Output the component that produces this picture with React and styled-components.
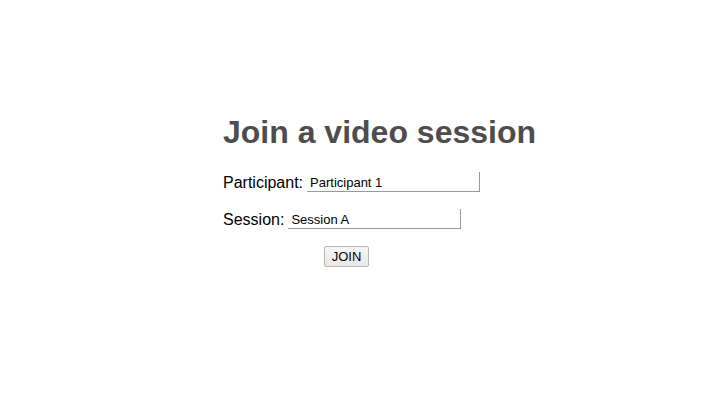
import React from 'react'
import styled, { createGlobalStyle } from 'styled-components'

const GlobalStyle = createGlobalStyle`
  body {
    margin: 0;
    background: #fff;
    font-family: "Liberation Sans", Arial, sans-serif;
  }
`

const Wrapper = styled.div`
  width: 272px;
  margin: 0 auto;
  padding-top: 112px;
`

const Title = styled.h1`
  margin: 0 0 20px;
  font-size: 32px;
  line-height: 40px;
  font-weight: bold;
  color: #4d4d4d;
  white-space: nowrap;
`

const Form = styled.form`
  width: 247px;
`

const Row = styled.p`
  display: flex;
  align-items: flex-end;
  gap: 4px;
  margin: 0 0 17px;
  white-space: nowrap;
`

const Label = styled.label`
  font-size: 16px;
  line-height: 18px;
  color: #000;
`

const Input = styled.input`
  box-sizing: border-box;
  width: 173px;
  height: 20px;
  padding: 1px 3px 0;
  border: none;
  border-right: 1px solid #999;
  border-bottom: 1px solid #999;
  font-family: "Liberation Sans", Arial, sans-serif;
  font-size: 13px;
  color: #000;
  outline: none;
`

const ButtonRow = styled.p`
  margin: 0;
  text-align: center;
`

const Button = styled.button`
  box-sizing: border-box;
  height: 21px;
  padding: 0 7px;
  border: 1px solid #b8b8b8;
  border-radius: 2px;
  background: linear-gradient(#f6f6f6, #e8e8e8);
  font-family: "Liberation Sans", Arial, sans-serif;
  font-size: 13px;
  color: #000;
`

const App = () => {
  return (
    <Wrapper>
      <GlobalStyle />
      <Title>Join a video session</Title>
      <Form onSubmit={e => e.preventDefault()}>
        <Row>
          <Label>Participant:</Label>
          <Input type="text" defaultValue="Participant 1" />
        </Row>
        <Row>
          <Label>Session:</Label>
          <Input type="text" defaultValue="Session A" />
        </Row>
        <ButtonRow>
          <Button type="submit">JOIN</Button>
        </ButtonRow>
      </Form>
    </Wrapper>
  )
}

export default App
